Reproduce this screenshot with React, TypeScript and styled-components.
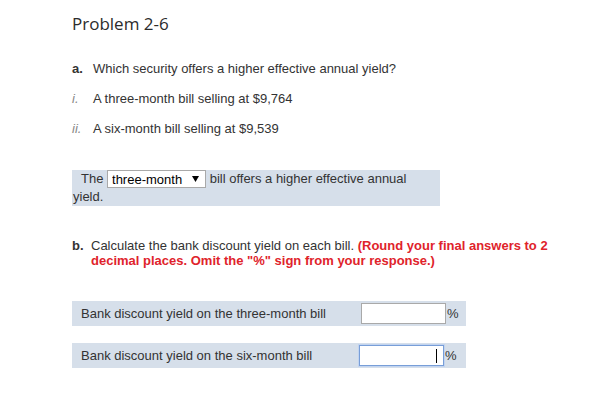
import React from 'react';
import styled, { createGlobalStyle } from 'styled-components';

const GlobalStyle = createGlobalStyle`
  body {
    margin: 0;
    background: #fff;
    font-family: "Liberation Sans", Arial, sans-serif;
    font-size: 13px;
    color: #333;
  }
`;

const Page = styled.div`
  padding: 12px 0 0 72px;
`;

const Title = styled.h1`
  margin: 0;
  font-family: "Open Sans", Lato, sans-serif;
  font-weight: 400;
  font-size: 17px;
  line-height: 24px;
  color: #2b2b2b;
`;

const Question = styled.div`
  display: flex;
  margin-top: 25px;
  line-height: 16px;
`;

const Item = styled.div`
  display: flex;
  margin-top: 14px;
  line-height: 16px;
`;

const Marker = styled.span<{ $w: number; $italic?: boolean }>`
  flex: none;
  width: ${(p) => p.$w}px;
  font-weight: ${(p) => (p.$italic ? 400 : 700)};
  font-style: ${(p) => (p.$italic ? 'italic' : 'normal')};
  color: ${(p) => (p.$italic ? '#888' : '#333')};
`;

const AnswerBox = styled.div`
  margin-top: 33px;
  width: 347px;
  padding: 0 20px 0 1px;
  background: #d6dfea;
  line-height: 18px;
  text-indent: 8px;
`;

const SelectWrap = styled.span`
  position: relative;
  display: inline-block;
  vertical-align: top;
  text-indent: 0;
`;

const Select = styled.select`
  appearance: none;
  display: block;
  width: 99px;
  height: 18px;
  margin: 0;
  padding: 0 0 0 4px;
  border: 1px solid #a9a9a9;
  border-radius: 0;
  background: #fff;
  font-family: "Liberation Sans", Arial, sans-serif;
  font-size: 13px;
  color: #000;
`;

const Arrow = styled.svg`
  position: absolute;
  right: 7px;
  top: 6px;
  pointer-events: none;
`;

const PartB = styled.div`
  display: flex;
  margin-top: 32px;
  width: 488px;
  line-height: 15px;
`;

const Warn = styled.strong`
  color: #e0232b;
`;

const Rows = styled.div`
  margin-top: 33px;
  display: flex;
  flex-direction: column;
  gap: 17px;
`;

const Row = styled.div`
  display: flex;
  align-items: center;
  width: 385px;
  height: 25px;
  padding-left: 9px;
  background: #d6dfea;
  line-height: 16px;
`;

const RowLabel = styled.span`
  width: 280px;
`;

const InputWrap = styled.span<{ $focused?: boolean }>`
  position: relative;
  display: inline-flex;
  margin-left: ${(p) => (p.$focused ? '-2px' : '0')};
`;

const Input = styled.input<{ $focused?: boolean }>`
  width: 85px;
  height: 21px;
  box-sizing: border-box;
  margin: 0;
  padding: 0 3px;
  text-align: right;
  border: 1px solid ${(p) => (p.$focused ? '#789ed8' : '#a9a9a9')};
  box-shadow: ${(p) => (p.$focused ? '0 0 0 1px #c2d4f0' : 'none')};
  outline: none;
  font-family: "Liberation Sans", Arial, sans-serif;
  font-size: 13px;
`;

const Caret = styled.span`
  position: absolute;
  right: 7px;
  top: 4px;
  width: 1px;
  height: 14px;
  background: #000;
`;

const Percent = styled.span`
  margin-left: 1px;
`;

export default function App() {
  return (
    <>
      <GlobalStyle />
      <Page>
        <Title>Problem 2-6</Title>

        <Question>
          <Marker $w={21}>a.</Marker>
          <span>Which security offers a higher effective annual yield?</span>
        </Question>
        <Item>
          <Marker $w={21} $italic>i.</Marker>
          <span>A three-month bill selling at $9,764</span>
        </Item>
        <Item>
          <Marker $w={21} $italic>ii.</Marker>
          <span>A six-month bill selling at $9,539</span>
        </Item>

        <AnswerBox>
          The{' '}
          <SelectWrap>
            <Select defaultValue="three-month">
              <option value="three-month">three-month</option>
              <option value="six-month">six-month</option>
            </Select>
            <Arrow width="7" height="6" viewBox="0 0 7 6">
              <path d="M0 0h7L3.5 6z" fill="#000" />
            </Arrow>
          </SelectWrap>{' '}
          bill offers a higher effective annual yield.
        </AnswerBox>

        <PartB>
          <Marker $w={19}>b.</Marker>
          <span>
            Calculate the bank discount yield on each bill.{' '}
            <Warn>
              (Round your final answers to 2 decimal places. Omit the "%" sign from your response.)
            </Warn>
          </span>
        </PartB>

        <Rows>
          <Row>
            <RowLabel>Bank discount yield on the three-month bill</RowLabel>
            <InputWrap>
              <Input type="text" />
            </InputWrap>
            <Percent>%</Percent>
          </Row>
          <Row>
            <RowLabel>Bank discount yield on the six-month bill</RowLabel>
            <InputWrap $focused>
              <Input type="text" $focused />
              <Caret />
            </InputWrap>
            <Percent>%</Percent>
          </Row>
        </Rows>
      </Page>
    </>
  );
}
